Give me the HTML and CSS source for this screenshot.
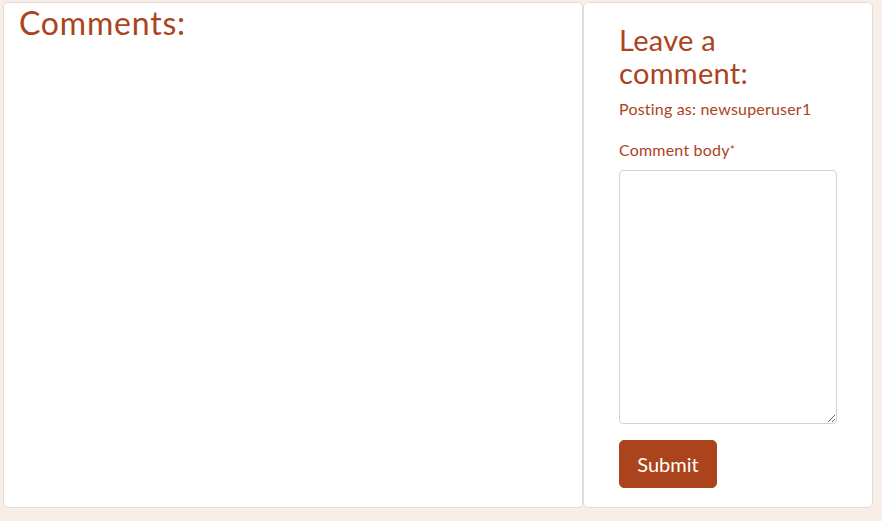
FILE: index.html
```html
<!DOCTYPE html>
<html>
<head>
<meta charset="utf-8">
<link rel="stylesheet" href="styles.css">
</head>
<body>
<div class="row">
  <section class="card card-comments">
    <h2 class="comments-title">Comments:</h2>
  </section>
  <section class="card card-form">
    <h3 class="form-title">Leave a comment:</h3>
    <p class="posting">Posting as: newsuperuser1</p>
    <form class="form">
      <label class="label" for="body">Comment body<span class="req">*</span></label>
      <textarea id="body" class="textarea"></textarea>
      <button type="button" class="btn">Submit</button>
    </form>
  </section>
</div>
</body>
</html>
```

FILE: styles.css
```css
html, body {
  margin: 0;
  padding: 0;
  background: #f8eee7;
  font-family: "Lato", "Noto Sans", sans-serif;
  color: #ab441c;
}
.row {
  display: flex;
  padding: 2px 0 0 3px;
}
.card {
  background: #fff;
  border: 1px solid #e2dcd8;
  border-radius: 5px;
  height: 506px;
  box-sizing: border-box;
}
.card-comments {
  width: 580px;
  padding: 0 15px;
}
.card-form {
  width: 290px;
  padding: 20px 35px 0 35px;
}
.comments-title {
  margin: 0;
  font-weight: 400;
  font-size: 32px;
  line-height: 40px;
  letter-spacing: 0.8px;
}
.form-title {
  margin: 0 0 8px 0;
  font-weight: 400;
  font-size: 29px;
  line-height: 33px;
  letter-spacing: 0.3px;
}
.posting {
  margin: 0 0 17px 0;
  font-size: 16px;
  line-height: 24px;
  letter-spacing: 0.2px;
}
.form {
  display: flex;
  flex-direction: column;
  align-items: flex-start;
}
.label {
  font-size: 16px;
  line-height: 24px;
  margin-bottom: 8px;
  letter-spacing: 0.2px;
}
.req { font-size: 12px; vertical-align: top; }
.textarea {
  width: 218px;
  height: 254px;
  box-sizing: border-box;
  border: 1px solid #ced4da;
  border-radius: 4px;
  margin: 0 0 16px 0;
  padding: 6px 12px;
  font-family: inherit;
}
.btn {
  background: #ab441c;
  color: #fff;
  border: 1px solid #ab441c;
  border-radius: 5px;
  font-family: inherit;
  font-size: 20px;
  line-height: 30px;
  padding: 8px 16px;
  width: 98px;
}
```
